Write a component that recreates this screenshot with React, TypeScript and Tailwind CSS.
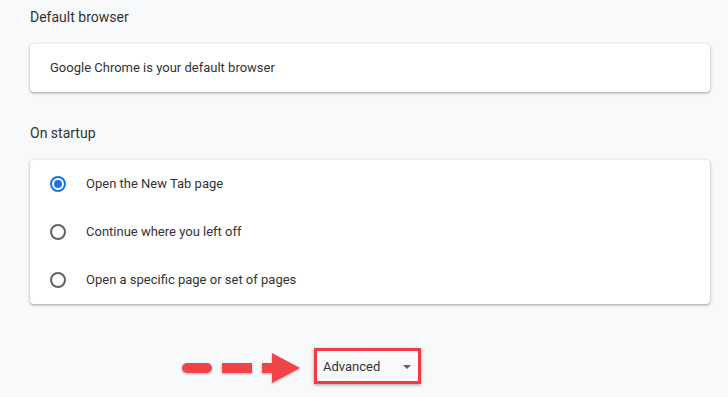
import React from "react";

function Radio({ checked }: { checked?: boolean }) {
  return checked ? (
    <div className="w-4 h-4 rounded-full border-2 border-[#1a73e8] flex items-center justify-center">
      <div className="w-2 h-2 rounded-full bg-[#1a73e8]" />
    </div>
  ) : (
    <div className="w-4 h-4 rounded-full border-2 border-[#5f6368]" />
  );
}

export default function App() {
  const rows = [
    { label: "Open the New Tab page", checked: true },
    { label: "Continue where you left off" },
    { label: "Open a specific page or set of pages" },
  ];
  return (
    <div className="w-[728px] h-[397px] bg-[#f8f9fa] overflow-hidden font-['Roboto',sans-serif] text-[#333]">
      <div className="pl-[30px] pr-[18px]">
        <div className="pt-[7px] h-[44px] text-[14px] text-[#333] leading-[20px]">Default browser</div>
        <div className="bg-white rounded-[4px] shadow-[0_1px_2px_rgba(60,64,67,0.3),0_1px_3px_1px_rgba(60,64,67,0.15)] h-[48px] flex items-center pl-[20px] text-[13px] text-[#333]">
          Google Chrome is your default browser
        </div>
        <div className="pt-[31px] h-[68px] text-[14px] leading-[20px]">On startup</div>
        <div className="bg-white rounded-[4px] shadow-[0_1px_2px_rgba(60,64,67,0.3),0_1px_3px_1px_rgba(60,64,67,0.15)] flex flex-col">
          {rows.map((r) => (
            <div key={r.label} className="h-[48px] flex items-center pl-[20px] text-[13px]">
              <Radio checked={r.checked} />
              <span className="ml-[20px]">{r.label}</span>
            </div>
          ))}
        </div>
        <div className="mt-[44px] flex items-start">
          <svg width="150" height="35" viewBox="0 0 150 35" className="ml-[122px] shrink-0 overflow-visible">
            <defs>
              <filter id="sh" x="-20%" y="-50%" width="140%" height="200%">
                <feDropShadow dx="0" dy="1" stdDeviation="1" floodColor="#000" floodOpacity="0.3" />
              </filter>
            </defs>
            <g filter="url(#sh)" fill="#f04447">
              <rect x="30" y="15" width="30" height="10" rx="5" />
              <rect x="70" y="15" width="30" height="10" />
              <rect x="110" y="15" width="12" height="10" />
              <polygon points="120,5 148,20 120,35" />
            </g>
          </svg>
          <div className="ml-[12px] w-[107px] h-[36px] border-[3px] border-[#ef3e42] shadow-[0_1px_3px_rgba(0,0,0,0.35)] flex items-center pl-[6px] pt-[2px] text-[13px] text-[#333]">
            <span>Advanced</span>
            <svg width="8" height="4" viewBox="0 0 8 4" className="ml-[23px]">
              <polygon points="0,0 8,0 4,4" fill="#5f6368" />
            </svg>
          </div>
        </div>
      </div>
    </div>
  );
}
